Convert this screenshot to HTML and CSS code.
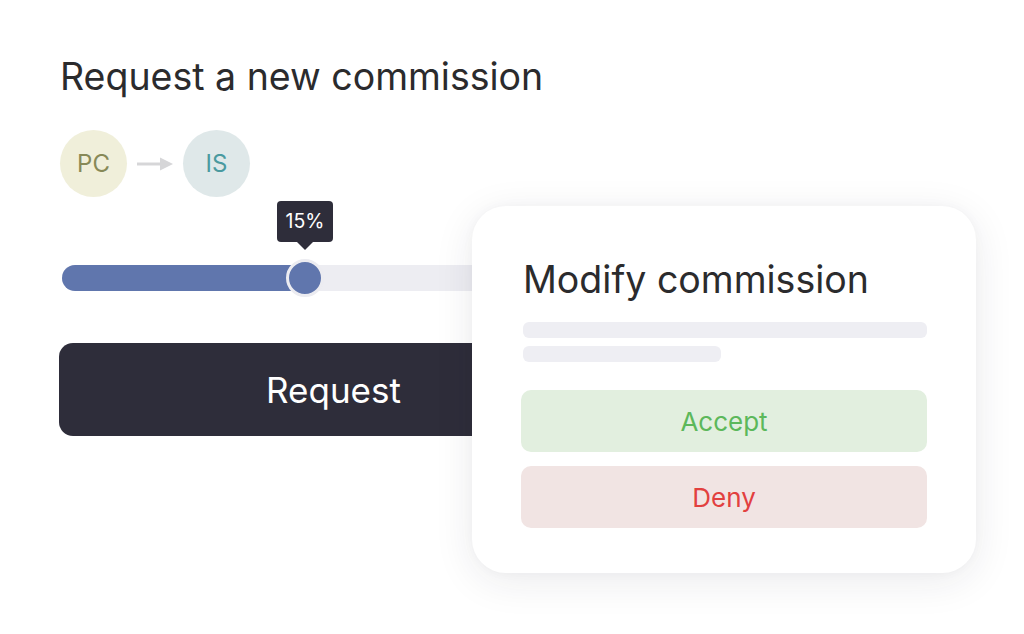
FILE: index.html
```html
<!DOCTYPE html>
<html lang="en">
<head>
<meta charset="utf-8">
<title>Commission</title>
<link rel="stylesheet" href="styles.css">
</head>
<body>
<main class="stage">
  <section class="request">
    <h1 class="title">Request a new commission</h1>
    <div class="people">
      <div class="avatar avatar-pc">PC</div>
      <svg class="arrow" width="36" height="14" viewBox="0 0 36 14" aria-hidden="true">
        <line x1="0" y1="7" x2="24" y2="7" stroke="#d6d6d8" stroke-width="3"/>
        <polygon points="23,0.5 36,7 23,13.5" fill="#d6d6d8"/>
      </svg>
      <div class="avatar avatar-is">IS</div>
    </div>
    <div class="slider">
      <div class="track">
        <div class="fill" style="width: 243px"></div>
        <div class="thumb" style="left: 243px">
          <div class="tooltip">15%</div>
        </div>
      </div>
    </div>
    <button class="btn-request">Request</button>
  </section>

  <section class="card">
    <h2 class="card-title">Modify commission</h2>
    <div class="skeleton skeleton-long"></div>
    <div class="skeleton skeleton-short"></div>
    <button class="btn btn-accept">Accept</button>
    <button class="btn btn-deny">Deny</button>
  </section>
</main>
</body>
</html>
```

FILE: styles.css
```css
* { box-sizing: border-box; }

html, body {
  margin: 0;
  padding: 0;
  background: #ffffff;
}

body {
  font-family: Inter, Roboto, "Liberation Sans", Arial, sans-serif;
  width: 1024px;
  height: 634px;
  overflow: hidden;
}

.stage {
  position: relative;
  width: 1024px;
  height: 634px;
}

.request {
  padding: 54px 0 0 60px;
  width: 620px;
}

.title {
  margin: 0;
  font-size: 37.5px;
  line-height: 46px;
  font-weight: 400;
  color: #2b2b2d;
  letter-spacing: 0;
}

.people {
  margin-top: 30px;
  display: flex;
  align-items: center;
  gap: 10px;
}

.avatar {
  width: 67px;
  height: 67px;
  border-radius: 50%;
  display: flex;
  align-items: center;
  justify-content: center;
  font-size: 24px;
  font-weight: 400;
}

.avatar-pc {
  background: #f0efda;
  color: #878957;
}

.avatar-is {
  background: #dfe8e9;
  color: #4a9aa0;
}

.arrow { display: block; }

.slider {
  margin-top: 4px;
  padding-top: 64px;
  padding-left: 2px;
}

.track {
  position: relative;
  width: 545px;
  height: 26px;
  border-radius: 13px;
  background: #ededf2;
}

.fill {
  height: 26px;
  border-radius: 13px;
  background: #6076ad;
}

.thumb {
  position: absolute;
  top: 50%;
  width: 38px;
  height: 38px;
  margin: -19px 0 0 -19px;
  border-radius: 50%;
  background: #6076ad;
  border: 3px solid #ececf1;
}

.tooltip {
  position: absolute;
  left: 50%;
  bottom: 52px;
  transform: translateX(-50%);
  width: 56px;
  height: 41px;
  border-radius: 4px;
  background: #2e2d3a;
  color: #ffffff;
  font-size: 19.5px;
  line-height: 41px;
  text-align: center;
}

.tooltip::after {
  content: "";
  position: absolute;
  left: 50%;
  top: 100%;
  margin-left: -8px;
  border-left: 8px solid transparent;
  border-right: 8px solid transparent;
  border-top: 8px solid #2e2d3a;
}

.btn-request {
  display: block;
  margin: 52px 0 0 -1px;
  width: 549px;
  height: 93px;
  border: none;
  border-radius: 14px;
  background: #2e2d3a;
  color: #ffffff;
  font-family: inherit;
  font-size: 35px;
  font-weight: 400;
  padding: 0;
}

.card {
  position: absolute;
  left: 472px;
  top: 206px;
  width: 504px;
  padding: 52px 49px 45px 49px;
  background: #ffffff;
  border-radius: 34px;
  box-shadow: 0 8px 40px rgba(30, 30, 50, 0.09), 0 0 12px rgba(30, 30, 50, 0.03);
}

.card-title {
  margin: 0 0 20px 2px;
  font-size: 37.5px;
  line-height: 44px;
  font-weight: 400;
  color: #2b2b2d;
}

.skeleton {
  height: 16px;
  border-radius: 6px;
  background: #eeeef3;
  margin-left: 2px;
}

.skeleton-long { width: 404px; }

.skeleton-short {
  width: 198px;
  margin-top: 8px;
}

.btn {
  display: block;
  width: 406px;
  height: 62px;
  border: none;
  border-radius: 10px;
  font-family: inherit;
  font-size: 26px;
  font-weight: 400;
  padding: 0;
}

.btn-accept {
  margin-top: 28px;
  background: #e2efdf;
  color: #5cb85b;
}

.btn-deny {
  margin-top: 14px;
  background: #f1e4e3;
  color: #e2403f;
}
```
